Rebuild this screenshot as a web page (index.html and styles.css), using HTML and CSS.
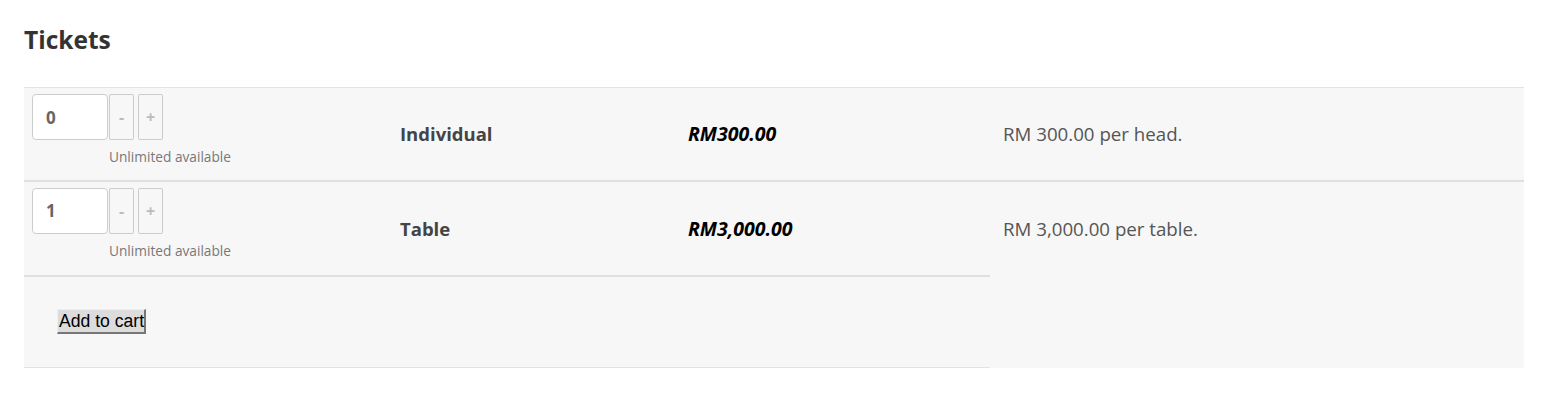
FILE: index.html
```html
<!DOCTYPE html>
<html lang="en">
<head>
<meta charset="UTF-8">
<title>Tickets</title>
<link rel="stylesheet" href="styles.css">
</head>
<body>
  <h2 class="title">Tickets</h2>

  <!-- ticket list -->
  <table class="tickets">
    <tr>
      <td class="qty-cell">
        <div class="qty">
          <input class="qty-input" type="text" value="0">
          <div class="qty-side">
            <div class="qty-buttons">
              <button class="qty-btn">-</button>
              <button class="qty-btn">+</button>
            </div>
            <div class="note">Unlimited available</div>
          </div>
        </div>
      </td>
      <td class="name">Individual</td>
      <td class="price">RM300.00</td>
      <td class="desc">RM 300.00 per head.</td>
    </tr>
    <tr class="row-sep">
      <td class="qty-cell">
        <div class="qty">
          <input class="qty-input" type="text" value="1">
          <div class="qty-side">
            <div class="qty-buttons">
              <button class="qty-btn">-</button>
              <button class="qty-btn">+</button>
            </div>
            <div class="note">Unlimited available</div>
          </div>
        </div>
      </td>
      <td class="name">Table</td>
      <td class="price">RM3,000.00</td>
      <td class="desc desc-tall" rowspan="2">RM 3,000.00 per table.</td>
    </tr>
    <tr>
      <td class="cart-cell" colspan="3">
        <button class="cart-btn">Add to cart</button>
      </td>
    </tr>
  </table>
</body>
</html>
```

FILE: styles.css
```css
body {
  margin: 0;
  padding: 0 24px;
  font-family: 'Open Sans', sans-serif;
  background: #ffffff;
  color: #444;
}

.title {
  margin: 0;
  padding-top: 26px;
  height: 87px;
  box-sizing: border-box;
  font-size: 24.5px;
  font-weight: 700;
  line-height: 28px;
  color: #333;
}

/* ticket table */
.tickets {
  width: 1500px;
  border-collapse: collapse;
  background: #f7f7f7;
  border-top: 1px solid #e3e3e3;
}
.tickets td {
  vertical-align: middle;
  padding: 0 8px;
}
.row-sep td {
  border-top: 2px solid #e0e0e0;
}
.qty-cell {
  width: 368px;
  height: 93px;
  box-sizing: border-box;
  padding: 6px 8px 0 8px !important;
  vertical-align: top !important;
}
.row-sep .qty-cell {
  height: 95px;
}
.qty {
  display: flex;
  align-items: flex-start;
  gap: 1px;
}
.qty-input {
  width: 76px;
  height: 46px;
  box-sizing: border-box;
  border: 1px solid #cccccc;
  border-radius: 4px;
  background: #fff;
  padding: 0 0 0 13px;
  font-family: 'Open Sans', sans-serif;
  font-size: 17px;
  font-weight: 700;
  color: #666;
}
.qty-buttons {
  display: flex;
  gap: 4px;
}
.qty-btn {
  width: 25px;
  height: 46px;
  padding: 0;
  border: 1px solid #cccccc;
  border-radius: 2px;
  background: #f7f7f7;
  color: #bbb;
  font-family: 'Open Sans', sans-serif;
  font-size: 16px;
  font-weight: 700;
}
.note {
  margin-top: 8px;
  font-size: 13.7px;
  line-height: 18px;
  color: #777;
  white-space: nowrap;
}

.name {
  width: 272px;
  font-size: 18.5px;
  font-weight: 700;
  color: #444;
}
.price {
  width: 294px;
  font-size: 19.5px;
  font-weight: 700;
  font-style: italic;
  color: #000;
}
.desc {
  padding-left: 13px !important;
  font-size: 18.7px;
  color: #555;
}
.desc-tall {
  vertical-align: top !important;
  padding-top: 34px !important;
}

.cart-cell {
  height: 90px;
  padding-left: 33px !important;
  border-top: 2px solid #e0e0e0;
  border-bottom: 1px solid #e3e3e3;
}
.cart-btn {
  font-family: 'Liberation Sans', Arial, sans-serif;
  font-size: 17.6px;
  color: #000;
  background: #dcdcdc;
  height: 25px;
  padding: 0 0 0 1px;
  border-top: 1px solid #eeeeee;
  border-left: 1px solid #eeeeee;
  border-right: 2px solid #777;
  border-bottom: 2px solid #777;
  border-radius: 0;
}
```
